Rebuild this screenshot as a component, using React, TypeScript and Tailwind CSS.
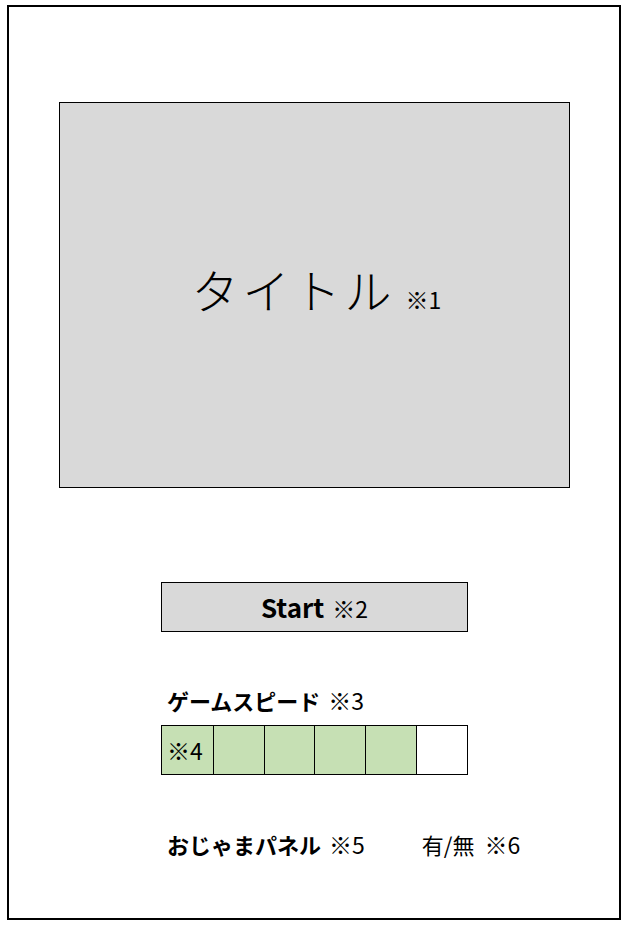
export default function App() {
  const cells = [true, true, true, true, true, false];
  const jp = "font-['Noto_Sans_CJK_JP',sans-serif]";

  return (
    <div className={`w-[627px] h-[928px] bg-white pt-[5px] pl-[7px] text-black ${jp}`}>
      <div className="w-[614px] h-[915px] border-2 border-black flex flex-col">
        {/* タイトル */}
        <div className="mt-[95px] ml-[50px] w-[511px] h-[386px] border border-black bg-[#d9d9d9] flex items-center justify-center">
          <div className="flex items-baseline gap-[10px] pl-[4px] mb-[14px]">
            <span className="text-[47px] leading-none tracking-[4px] font-light">タイトル</span>
            <span className="text-[23px] leading-none">※1</span>
          </div>
        </div>

        {/* Start */}
        <div className="mt-[94px] ml-[152px] w-[307px] h-[50px] border border-black bg-[#d9d9d9] flex items-center justify-center">
          <span className="flex items-baseline gap-[8px]">
            <span className="text-[26px] font-bold leading-none">Start</span>
            <span className="text-[23px] leading-none">※2</span>
          </span>
        </div>

        {/* ゲームスピード */}
        <div className="mt-[56px] ml-[158px] h-[24px] flex items-center gap-[8px]">
          <span className="text-[22px] font-bold leading-none">ゲームスピード</span>
          <span className="text-[23px] leading-none">※3</span>
        </div>
        <div className="mt-[13px] ml-[152px] w-[307px] h-[50px] flex border border-black">
          {cells.map((on, i) => (
            <div
              key={i}
              className={`w-[51px] h-full flex items-center pl-[5px] ${i > 0 ? "border-l border-black" : ""} ${on ? "bg-[#c6e0b4]" : "bg-white"}`}
            >
              {i === 0 && <span className="text-[23px] leading-none">※4</span>}
            </div>
          ))}
        </div>

        {/* おじゃまパネル */}
        <div className="mt-[57px] ml-[158px] h-[24px] flex items-center">
          <span className="text-[22px] font-bold leading-none">おじゃまパネル</span>
          <span className="text-[23px] leading-none ml-[8px]">※5</span>
          <span className="text-[22px] leading-none ml-[57px]">有/無</span>
          <span className="text-[23px] leading-none ml-[10px]">※6</span>
        </div>
      </div>
    </div>
  );
}
